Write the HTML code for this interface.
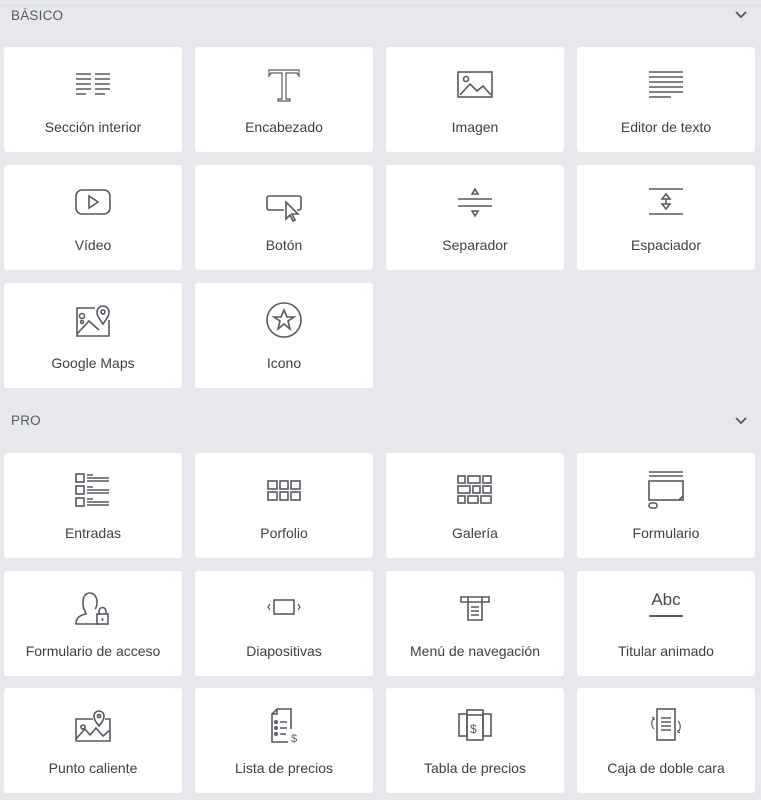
<!DOCTYPE html>
<html><head><meta charset="utf-8"><style>
*{margin:0;padding:0;box-sizing:border-box}
body{width:761px;height:800px;background:#e6e8eb;position:relative;overflow:hidden;font-family:"Liberation Sans",sans-serif}
.h{position:absolute;left:11px;font-size:13.5px;color:#565b62;letter-spacing:.2px}
.chev{position:absolute;right:14px;width:12px;height:8px}
.c{position:absolute;width:178px;height:105px;background:#fff;border-radius:3px}
.c svg{position:absolute;left:69px;top:17px;width:40px;height:40px;fill:none;stroke:#555a61;stroke-width:1.6}
.c span{position:absolute;left:0;right:0;top:72px;text-align:center;font-size:14px;color:#3c4047}
.line{position:absolute;left:0;right:0;top:5px;height:1px;background:#dcdee1}
</style></head><body>
<div class="line"></div>
<div class="h" style="top:8px">BÁSICO</div>
<svg class="chev" style="top:11px" viewBox="0 0 12 8"><path d="M1 1l5 5 5-5" stroke="#555a61" stroke-width="1.8" fill="none"/></svg>
<div class="h" style="top:413px">PRO</div>
<svg class="chev" style="top:417px" viewBox="0 0 12 8"><path d="M1 1l5 5 5-5" stroke="#555a61" stroke-width="1.8" fill="none"/></svg>

<div class="c" style="left:4px;top:47px"><svg viewBox="0 0 40 40"><path d="M3 10h15M3 15h15M3 20h15M3 25h15M3 30h10M22 10h15M22 15h15M22 20h15M22 25h15M22 30h10"/></svg><span>Sección interior</span></div>
<div class="c" style="left:195px;top:47px"><svg viewBox="0 0 40 40"><path d="M5 6h30v6l-2-3H22v26h4v2H14v-2h4V9H7l-2 3z" stroke-width="1.2"/></svg><span>Encabezado</span></div>
<div class="c" style="left:386px;top:47px"><svg viewBox="0 0 40 40"><rect x="3" y="8" width="34" height="25"/><circle cx="11" cy="15" r="2.5"/><path d="M5 31l10-11 7 7 6-5 8 9"/></svg><span>Imagen</span></div>
<div class="c" style="left:577px;top:47px"><svg viewBox="0 0 40 40"><path d="M3 8h34M3 13h34M3 18h34M3 23h34M3 28h34M3 33h22"/></svg><span>Editor de texto</span></div>

<div class="c" style="left:4px;top:165px"><svg viewBox="0 0 40 40"><rect x="3" y="8" width="34" height="24" rx="6"/><path d="M16 14v12l9-6z"/></svg><span>Vídeo</span></div>
<div class="c" style="left:195px;top:165px"><svg viewBox="0 0 40 40"><path d="M20 28H5a2 2 0 0 1-2-2v-10a2 2 0 0 1 2-2h30a2 2 0 0 1 2 2v10a2 2 0 0 1-2 2h-2"/><path d="M22 20v17l4-4 3 6 2-1-3-6h6z"/></svg><span>Botón</span></div>
<div class="c" style="left:386px;top:165px"><svg viewBox="0 0 40 40"><path d="M3 17h34M3 24h34M17 12l3-5 3 5zM17 29l3 5 3-5z"/></svg><span>Separador</span></div>
<div class="c" style="left:577px;top:165px"><svg viewBox="0 0 40 40"><path d="M3 7h34M3 32h34M16 17l4-5 4 5zM16 22l4 5 4-5zM20 17v5"/></svg><span>Espaciador</span></div>

<div class="c" style="left:4px;top:283px"><svg viewBox="0 0 40 40"><path d="M22 8H4v28h32V20"/><circle cx="9" cy="16" r="2.5"/><circle cx="9" cy="22" r="1.5"/><path d="M4 34l12-13 10 9"/><path d="M30 24c-4-6-6-8-6-12a6 6 0 0 1 12 0c0 4-2 6-6 12z"/><circle cx="30" cy="12" r="2"/></svg><span>Google Maps</span></div>
<div class="c" style="left:195px;top:283px"><svg viewBox="0 0 40 40"><circle cx="20" cy="20" r="17"/><path d="M20 10l3 7h7l-6 4 2 8-6-5-6 5 2-8-6-4h7z"/></svg><span>Icono</span></div>

<div class="c" style="left:4px;top:453px"><svg viewBox="0 0 40 40"><rect x="3" y="4" width="8" height="8"/><rect x="3" y="16" width="8" height="8"/><rect x="3" y="28" width="8" height="8"/><path d="M14 5h6M14 8h22M14 11h22M14 17h6M14 20h22M14 23h22M14 29h6M14 32h22M14 35h22"/></svg><span>Entradas</span></div>
<div class="c" style="left:195px;top:453px"><svg viewBox="0 0 40 40"><rect x="4" y="11" width="9" height="8"/><rect x="16" y="11" width="8" height="8"/><rect x="27" y="11" width="9" height="8"/><rect x="4" y="22" width="9" height="8"/><rect x="16" y="22" width="8" height="8"/><rect x="27" y="22" width="9" height="8"/></svg><span>Porfolio</span></div>
<div class="c" style="left:386px;top:453px"><svg viewBox="0 0 40 40"><rect x="3" y="6" width="7" height="7"/><rect x="13" y="6" width="12" height="7"/><rect x="28" y="6" width="8" height="7"/><rect x="3" y="16" width="12" height="7"/><rect x="18" y="16" width="7" height="7"/><rect x="28" y="16" width="8" height="7"/><rect x="3" y="26" width="7" height="7"/><rect x="13" y="26" width="10" height="7"/><rect x="26" y="26" width="10" height="7"/></svg><span>Galería</span></div>
<div class="c" style="left:577px;top:453px"><svg viewBox="0 0 40 40"><path d="M3 2h34M3 6h34"/><rect x="3" y="11" width="34" height="19"/><rect x="3" y="33" width="8" height="5" rx="2.5"/><path d="M33 30l4-4"/></svg><span>Formulario</span></div>

<div class="c" style="left:4px;top:571px"><svg viewBox="0 0 40 40"><path d="M26 36H3c0-6 4-9 10-10l-1-3c-2-2-2-6-2-9 0-6 3-9 7-9s7 4 7 9c0 2 0 5-2 7"/><rect x="24" y="26" width="11" height="10"/><path d="M26 26v-3a3.5 3.5 0 0 1 7 0v3M29.5 30v3"/></svg><span>Formulario de acceso</span></div>
<div class="c" style="left:195px;top:571px"><svg viewBox="0 0 40 40"><rect x="10" y="12" width="20" height="14"/><path d="M6 16l-2 3 2 3M34 16l2 3-2 3" stroke-width="1.2"/></svg><span>Diapositivas</span></div>
<div class="c" style="left:386px;top:571px"><svg viewBox="0 0 40 40"><path d="M6 9h28v5H6zM13 9v5M27 9v5M13 14v18h14V14M16 19h8M16 23h8M16 27h8"/></svg><span>Menú de navegación</span></div>
<div class="c" style="left:577px;top:571px"><svg viewBox="0 0 40 40"></svg><span style="top:19px;font-size:17px;color:#444950">Abc</span><div style="position:absolute;left:72px;top:44px;width:34px;height:2px;background:#555a61;border-radius:1px"></div><span>Titular animado</span></div>

<div class="c" style="left:4px;top:688px"><svg viewBox="0 0 40 40"><path d="M20 14H3v22h34V14h-5"/><circle cx="10" cy="22" r="2"/><path d="M3 34l9-10 5 6 6-7 7 8 7-6"/><path d="M26 21c-3-4-5-6-5-10a5 5 0 0 1 10 0c0 4-2 6-5 10z"/><circle cx="26" cy="11" r="1.6"/></svg><span>Punto caliente</span></div>
<div class="c" style="left:195px;top:688px"><svg viewBox="0 0 40 40"><path d="M27 24V4H13L8 9v28h16M13 4v5H8"/><circle cx="12" cy="17" r="1.2"/><circle cx="12" cy="23" r="1.2"/><circle cx="12" cy="29" r="1.2"/><path d="M16 17h7M16 23h7M16 29h6"/><text x="27" y="37" font-size="11" fill="#555a61" stroke="none" font-family="Liberation Sans">$</text></svg><span>Lista de precios</span></div>
<div class="c" style="left:386px;top:688px"><svg viewBox="0 0 40 40"><rect x="4" y="9" width="8" height="22"/><rect x="28" y="9" width="8" height="22"/><rect x="12" y="5" width="16" height="30"/><path d="M12 10h16"/><text x="15" y="28" font-size="12" fill="#555a61" stroke="none" font-family="Liberation Sans">$</text></svg><span>Tabla de precios</span></div>
<div class="c" style="left:577px;top:688px"><svg viewBox="0 0 40 40"><rect x="11" y="4" width="18" height="31"/><path d="M15 13h10M15 17h10M15 21h10M15 25h10"/><path d="M8 13c-3 3-3 8 0 11M6 12l2 1 0 2M32 27c3-3 3-8 0-11M34 28l-2-1 0-2" stroke-width="1.2"/></svg><span>Caja de doble cara</span></div>
</body></html>
